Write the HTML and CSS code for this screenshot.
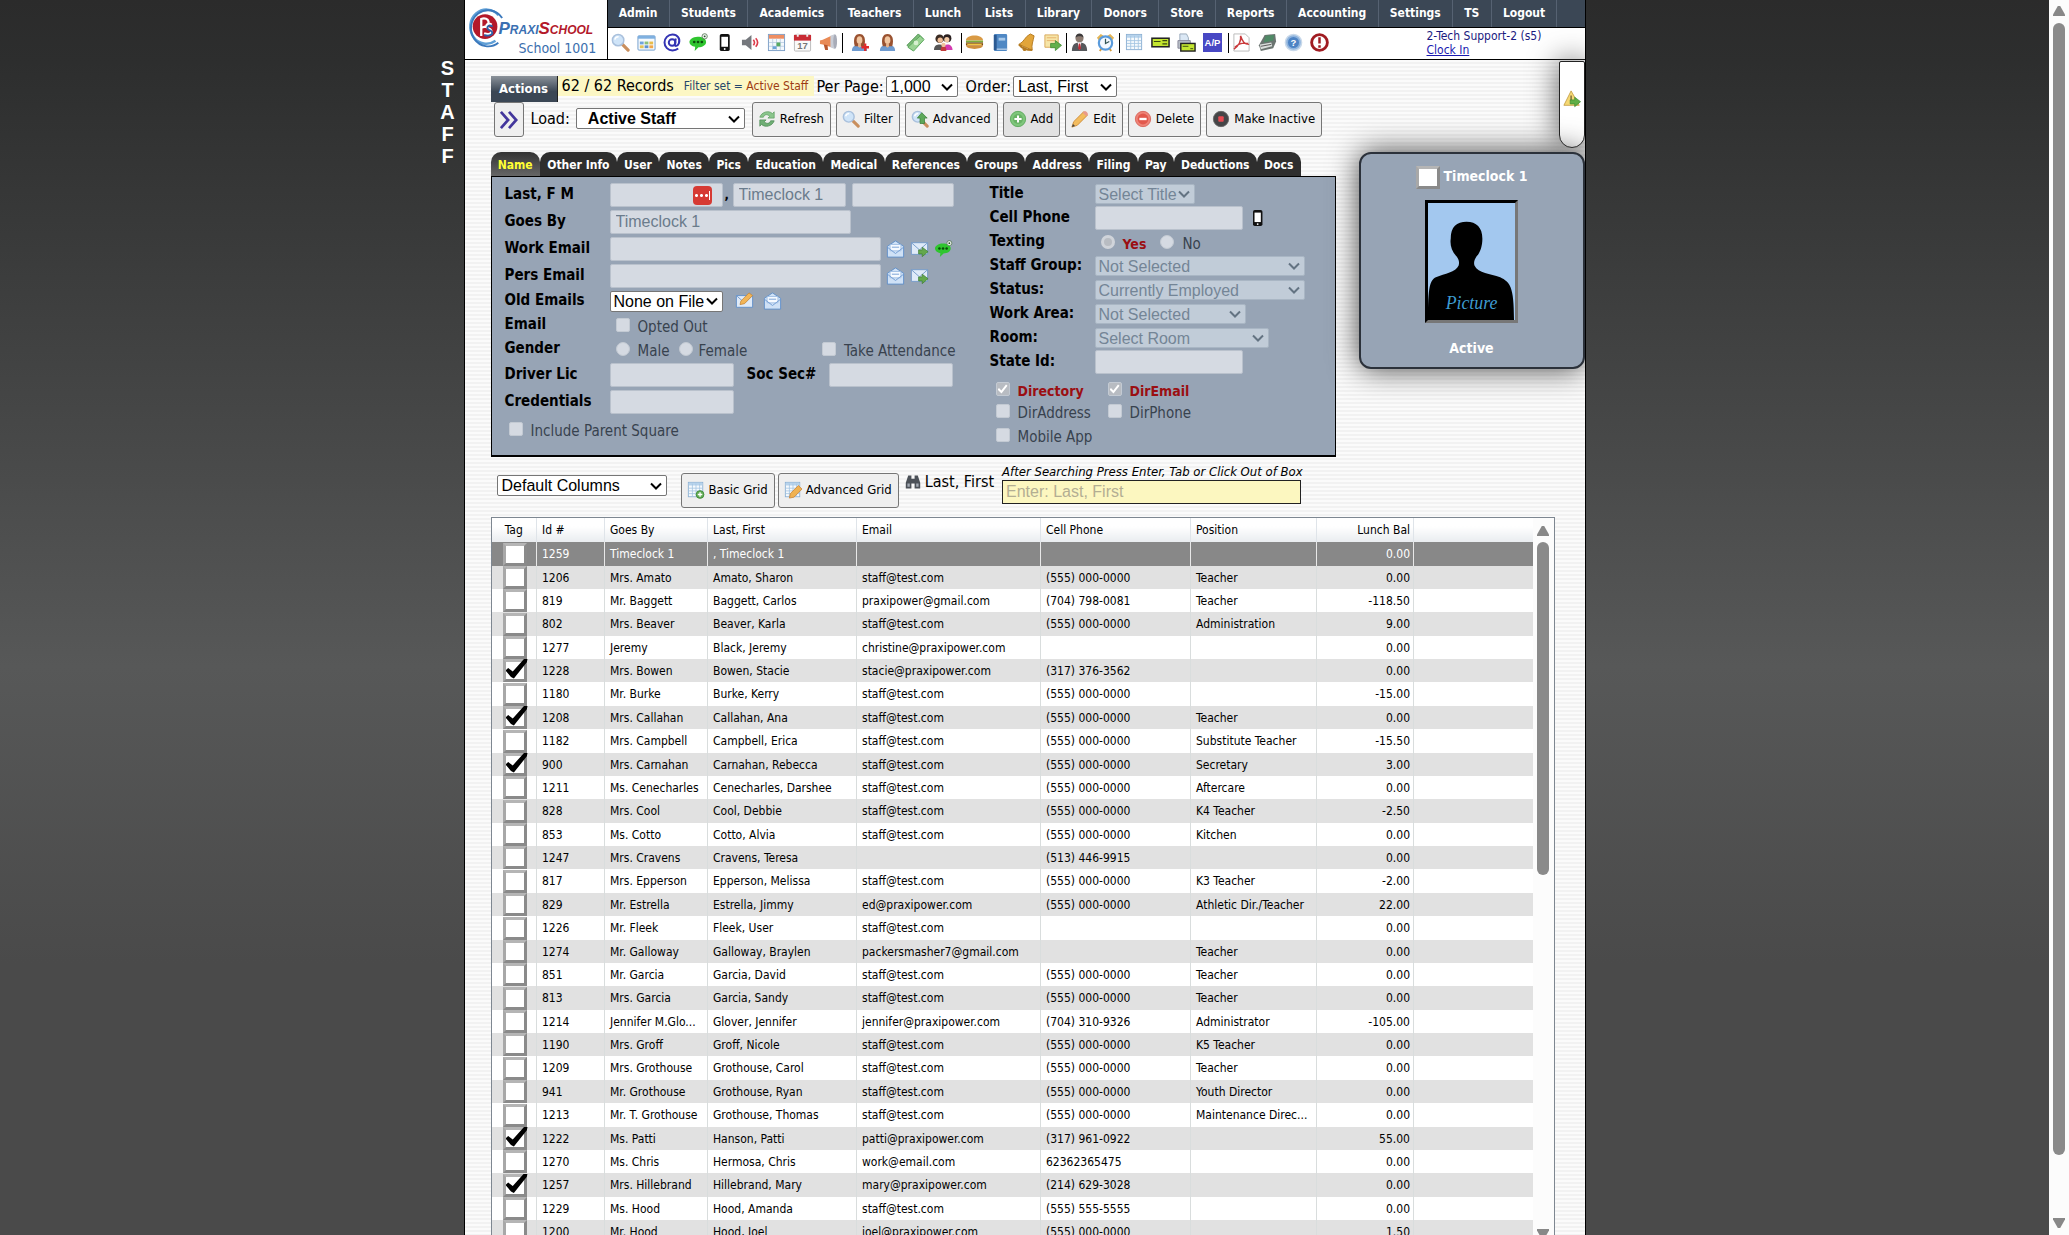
FILE: index.html
```html
<!DOCTYPE html>
<html lang="en">
<head>
<meta charset="utf-8">
<title>PraxiSchool - Staff</title>
<link rel="stylesheet" href="styles.css">
</head>
<body>
<svg class="sprite" aria-hidden="true">
  <symbol id="i-search" viewBox="0 0 20 20"><path d="M11 11l7 7" stroke="#c98f5e" stroke-width="3.4" stroke-linecap="round"/><circle cx="7.5" cy="7.5" r="6" fill="#cfe4f8" stroke="#a9c0dc" stroke-width="1.6"/><path d="M4 7a4 4 0 0 1 4-3" stroke="#fff" stroke-width="1.6" fill="none"/></symbol>
  <symbol id="i-window" viewBox="0 0 20 20"><rect x="1" y="3" width="18" height="15" rx="1" fill="#f5f9fd" stroke="#6f9ccb"/><path d="M1 3h18v3H1z" fill="#7fb0e0"/><path d="M3 9h4v3H3z" fill="#6fa3dc"/><path d="M8 9h4v3H8z" fill="#8cc07a"/><path d="M13 9h4v3h-4z" fill="#e8bc4c"/><path d="M3 13h4v3H3z" fill="#e2c35a"/><path d="M8 13h4v3H8z" fill="#5d92d2"/><path d="M13 13h4v3h-4z" fill="#f0a64a"/></symbol>
  <symbol id="i-at" viewBox="0 0 20 20"><g fill="none" stroke="#3434b4" stroke-width="2.1"><circle cx="9.600" cy="10" r="3.500"/><path d="M13.400 5.800l-1 6.400c-.2 2 3 2 4.300-1.200C18.500 5.500 15 1.600 10 1.600A8.400 8.400 0 0 0 10 18.400c2.600 0 4.600-.8 6-2"/></g></symbol>
  <symbol id="i-chat" viewBox="0 0 20 20"><path d="M9 4c5 0 9 2 9 5.500S14 15 10 15l-4 4 .5-4.400C3 14 .5 12 .5 9.500S4 4 9 4z" fill="#2fc52f"/><g fill="#0a4d0a"><circle cx="5.500" cy="9.500" r="1.400"/><circle cx="9.500" cy="9.500" r="1.400"/><circle cx="13.500" cy="9.500" r="1.400"/></g><circle cx="16.500" cy="3.500" r="2.800" fill="#eef4ee" stroke="#4a6b4a" stroke-width=".8"/><circle cx="16.500" cy="3.500" r="1" fill="#274f27"/></symbol>
  <symbol id="i-phone" viewBox="0 0 20 20"><rect x="5" y="1" width="10.500" height="18" rx="2" fill="#111"/><rect x="6.700" y="4" width="7" height="10.500" fill="#fff"/><circle cx="10.200" cy="16.800" r="1" fill="#fff"/></symbol>
  <symbol id="i-sound" viewBox="0 0 20 20"><path d="M1 7h4l6-5v16l-6-5H1z" fill="#75787d"/><path d="M13 7q2.400 3 0 6M15.500 5.500q4 4.500 0 9" fill="none" stroke="#dd3b4a" stroke-width="1.700"/></symbol>
  <symbol id="i-sched" viewBox="0 0 20 20"><rect x="1.500" y="1.500" width="17" height="17" fill="#f4f8fc" stroke="#7d9fc7"/><path d="M2 2h16v4H2z" fill="#ef8e62"/><path d="M2 10h16M2 14h16M6 6v12M10 6v12M14 6v12" stroke="#b5c9df" stroke-width=".8"/><path d="M10 10h4v4h-4z" fill="#58aa62"/><path d="M6 14h4v3H6z" fill="#6ba4d8"/></symbol>
  <symbol id="i-horn" viewBox="0 0 20 20"><path d="M1 8l3-1 9-4v12l-9-3-3-.5z" fill="#e98a55"/><path d="M12 3l5-2v16l-5-2z" fill="#c9cdd6"/><ellipse cx="17" cy="9" rx="2" ry="7.500" fill="#a8acb8"/><path d="M5 12l1.500 6h3L9 13z" fill="#b7562c"/></symbol>
  <symbol id="i-woman" viewBox="0 0 20 20"><path d="M2 19c0-5 3-6 8-6s8 1 8 6z" fill="#6f9bd0"/><path d="M5 14C3 6 5 1 10 1s7 5 5 13z" fill="#9a5230"/><ellipse cx="10" cy="7.500" rx="3" ry="4" fill="#f1c6a0"/><path d="M8.500 11h3v3l-1.500 1.500L8.500 14z" fill="#e7b48c"/></symbol>
  <symbol id="i-womanadd" viewBox="0 0 20 20"><use href="#i-woman"/><path d="M16 11v8M12 15h8" stroke="#e02a2a" stroke-width="2.400"/></symbol>
  <symbol id="i-cash" viewBox="0 0 20 20"><path d="M1 13L13 1l5 5L7 18z" fill="#7dbb78" stroke="#4c9450"/><path d="M2 15L15 3l4 4L8 19z" fill="#9ad393" stroke="#5aa55c"/><circle cx="10.500" cy="10.500" r="2.500" fill="#d7f0d0"/></symbol>
  <symbol id="i-people" viewBox="0 0 20 20"><circle cx="6" cy="6" r="4.500" fill="#3a2b22"/><circle cx="6.500" cy="7.500" r="2.800" fill="#efbd97"/><circle cx="14" cy="5.500" r="4.300" fill="#2b2020"/><circle cx="13.500" cy="7" r="2.700" fill="#f1c9a5"/><path d="M0 18c0-5 3-6 6-6s5 2 5 6z" fill="#555"/><path d="M10 18c0-5 2-6 4.500-6s5 2 5 6z" fill="#d43bb0"/><path d="M7 19c0-4 1-5 3-5s3 1 3 5z" fill="#c23c3c"/><circle cx="10" cy="12.500" r="2.300" fill="#f0c49c"/></symbol>
  <symbol id="i-burger" viewBox="0 0 20 20"><path d="M1 8c0-7 18-7 18 0z" fill="#d99a44"/><path d="M1 8h18v2H1z" fill="#7fae3a"/><path d="M1 10h18v3H1z" fill="#6b3d1e"/><path d="M1 11h18l-2 1.500H3z" fill="#f0c545"/><path d="M1 13h18c0 5-18 5-18 0z" fill="#cf8f3c"/></symbol>
  <symbol id="i-book" viewBox="0 0 20 20"><rect x="3" y="1" width="14" height="18" rx="1.500" fill="#4f88c4"/><path d="M3 2h3v16H3z" fill="#2b5a92"/><path d="M8 5h7v3H8z" fill="#a8c9ea"/><path d="M6 17h11" stroke="#dce8f4"/></symbol>
  <symbol id="i-bell" viewBox="0 0 20 20"><path d="M2 12C8 9 8 4 14 1l4 2c-1 6-3 9-2 15z" fill="#e2a53a" stroke="#b57a1f"/><path d="M2 12c3 4 9 6 14 6" stroke="#b57a1f" stroke-width="2" fill="none"/><circle cx="8" cy="17" r="2" fill="#b57a1f"/></symbol>
  <symbol id="i-export" viewBox="0 0 20 20"><path d="M2 2h14v13H2z" fill="#f6e5a8" stroke="#d9a95c"/><path d="M4 5h10M4 8h9" stroke="#e7b26c"/><path d="M8 11h5V8l6.500 5-6.500 5.500v-3H8z" fill="#62b04a" stroke="#3d8a2f" stroke-width=".8"/></symbol>
  <symbol id="i-man" viewBox="0 0 20 20"><path d="M2 19c0-7 3-9 8-9s8 2 8 9z" fill="#56585c"/><circle cx="10" cy="5.500" r="4.200" fill="#8b7a70"/><path d="M5.800 5c0-6 8.400-6 8.400 0-2-2-6-2-8.400 0z" fill="#3c3a3a"/><path d="M8 10h4l-2 8z" fill="#fff"/><path d="M9.300 11h1.500l.6 5-1.400 2-1.300-2z" fill="#c52b35"/></symbol>
  <symbol id="i-clock" viewBox="0 0 20 20"><path d="M1 5l4-4 3 2-5 5zM19 5l-4-4-3 2 5 5z" fill="#e3b455"/><path d="M4 19l2-3M16 19l-2-3" stroke="#d39a3b" stroke-width="2"/><circle cx="10" cy="10.500" r="7" fill="#f4f9ff" stroke="#5a9bdc" stroke-width="2.300"/><path d="M10 6v5l4-2" fill="none" stroke="#355" stroke-width="1.300"/></symbol>
  <symbol id="i-grid" viewBox="0 0 20 20"><rect x="1.500" y="1.500" width="16" height="16" fill="#f6fafd" stroke="#8db1d4"/><path d="M2 2h15v3H2z" fill="#b7d3ec"/><path d="M2 8h15M2 11h15M2 14h15M6 3v14M10 3v14M14 3v14" stroke="#a5c5e2" stroke-width=".9"/></symbol>
  <symbol id="i-gridadd" viewBox="0 0 20 20"><use href="#i-grid"/><circle cx="14.500" cy="15" r="4.300" fill="#63ad56" stroke="#3d8a35"/><path d="M14.500 12.500v5M12 15h5" stroke="#fff" stroke-width="1.500"/></symbol>
  <symbol id="i-gridedit" viewBox="0 0 20 20"><use href="#i-grid"/><path d="M6 19l1-5 9-9 4 4-9 9z" fill="#f0b252" stroke="#c97f2d" stroke-width=".8"/></symbol>
  <symbol id="i-check" viewBox="0 0 20 20"><rect x="1" y="5.500" width="18" height="9" fill="#c3e52f" stroke="#222" stroke-width="1.600"/><path d="M3 9h7M12 11.500h5M12 8h5" stroke="#3a4a10" stroke-width="1.200"/></symbol>
  <symbol id="i-checkprint" viewBox="0 0 20 20"><path d="M3 1h7l2 4v4H3z" fill="#dbe8f5" stroke="#9ab"/><path d="M1 8h13v8H1z" fill="#b8bec6" stroke="#889"/><rect x="4" y="11" width="15" height="8" fill="#c3e52f" stroke="#222" stroke-width="1.500"/><path d="M6 14h6M14 16.500h3" stroke="#3a4a10"/></symbol>
  <symbol id="i-pdf" viewBox="0 0 20 20"><path d="M2 1h12l4 4v14H2z" fill="#fff" stroke="#bbb"/><path d="M9 3c2 6 4 9 9 9M9 3c1 6-3 11-7 14M3 15c4-4 9-5 14-4" fill="none" stroke="#c9393b" stroke-width="1.500"/></symbol>
  <symbol id="i-register" viewBox="0 0 20 20"><path d="M7 2l11-1 1 8-3 7-13 3-2-6z" fill="#6a7470"/><path d="M8 3l9-1-1 6-10 2z" fill="#4f8a66"/><path d="M2 12l12-2 1 4-12 3z" fill="#d9dedb"/><path d="M3 14l11-2" stroke="#555"/></symbol>
  <symbol id="i-alert" viewBox="0 0 20 20"><circle cx="10" cy="10" r="8.300" fill="#fff" stroke="#a01c22" stroke-width="3"/><path d="M10 4.500v6.500M10 13v2.500" stroke="#a01c22" stroke-width="2.600"/></symbol>
  <symbol id="i-refresh" viewBox="0 0 20 20"><path d="M2 8C4 2 12 0 16 4l2-2v7h-7l2-2C10 4 7 5 6 8z" fill="#8ac58c" stroke="#5d9c62" stroke-width=".8"/><path d="M18 12c-2 6-10 8-14 4l-2 2v-7h7l-2 2c3 3 6 2 7-1z" fill="#6fae74" stroke="#4c8a53" stroke-width=".8"/></symbol>
  <symbol id="i-advsearch" viewBox="0 0 20 20"><use href="#i-search"/><path d="M12 3l6 6h-3v6h-5V9H7z" fill="#5da85a" stroke="#3b7f3c" stroke-width=".8"/></symbol>
  <symbol id="i-add" viewBox="0 0 20 20"><circle cx="10" cy="10" r="8.500" fill="#7fc67c" stroke="#5ea95d"/><circle cx="10" cy="10" r="5.500" fill="#68b265"/><path d="M10 6v8M6 10h8" stroke="#fff" stroke-width="2.200"/></symbol>
  <symbol id="i-edit" viewBox="0 0 20 20"><path d="M1 19l2-6L14 2l4 4L7 17z" fill="#f3bc5e" stroke="#cc8a35"/><path d="M13 3l2-2q3 0 4 4l-2 2z" fill="#e99a8a"/><path d="M1 19l1.200-3.500 2.300 2.300z" fill="#444"/></symbol>
  <symbol id="i-delete" viewBox="0 0 20 20"><circle cx="10" cy="10" r="8.500" fill="#ee8478" stroke="#d8665b"/><circle cx="10" cy="10" r="6" fill="#e2584c"/><path d="M6 10h8" stroke="#fff" stroke-width="2.600"/></symbol>
  <symbol id="i-stop" viewBox="0 0 20 20"><circle cx="10" cy="10" r="8.500" fill="#454547" stroke="#666"/><rect x="7" y="7" width="6" height="6" rx="1" fill="#e84a52"/></symbol>
  <symbol id="i-fwd" viewBox="0 0 20 20"><path d="M1 1l8 9-8 9M10 1l8 9-8 9" fill="none" stroke="#43369c" stroke-width="3"/></symbol>
  <symbol id="i-warn" viewBox="0 0 20 20"><path d="M9 1l9 16H1z" fill="#f5d873" stroke="#c7a24a"/><path d="M9 6v6" stroke="#7a6a3a" stroke-width="1.600"/><path d="M8 11h5V8l6.500 5-6.500 5.500v-3H8z" fill="#5fae45" stroke="#3d8a2f" stroke-width=".8"/></symbol>
  <symbol id="i-open" viewBox="0 0 20 20"><path d="M1 7l9-6 9 6v12H1z" fill="#cfe1f6" stroke="#5f8fca"/><path d="M4 5h12v7H4z" fill="#f6faff" stroke="#8fb3dd" stroke-width=".8"/><path d="M6 8h8M1 8l9 7 9-7" fill="none" stroke="#6f9bd2"/></symbol>
  <symbol id="i-send" viewBox="0 0 20 20"><path d="M1 3h18v13H1z" fill="#dfeaf8" stroke="#7298c8"/><path d="M1 3l9 8 9-8" fill="none" stroke="#7298c8"/><path d="M9 11h4V8l6.500 5-6.500 5.500v-3H9z" fill="#64a84d" stroke="#3f7e33" stroke-width=".8"/></symbol>
  <symbol id="i-mailedit" viewBox="0 0 20 20"><path d="M1 4h18v13H1z" fill="#dfeaf8" stroke="#5f8fca"/><path d="M1 4l9 8 9-8" fill="none" stroke="#7298c8"/><path d="M5 14l1-4 9-9 4 3-9 9z" fill="#f2b557" stroke="#c5822f" stroke-width=".8"/></symbol>
  <symbol id="i-binoc" viewBox="0 0 20 20"><path d="M4 2h4v4h4V2h4l3 9v7h-7v-6H8v6H1v-7z" fill="#4c5158"/><path d="M3 12h3v4H3zM14 12h3v4h-3z" fill="#a4abb5"/></symbol>
</svg>

<div class="app">
<aside class="side"><h1 class="side-title"><span>S</span><span>T</span><span>A</span><span>F</span><span>F</span></h1></aside>
<div class="page">
  <header class="top">
    <a class="logo" href="#">
      <svg class="logo-mark" viewBox="0 0 40 44" aria-hidden="true"><path d="M33 9A17 18 0 1 0 30 36" fill="none" stroke="#5f9fd6" stroke-width="2.500"/><path d="M37 12A18 19 0 1 0 33 38" fill="none" stroke="#3b79bd" stroke-width="2"/><circle cx="19" cy="21" r="13" fill="#b3182a"/><path d="M15 31V13c8-3 12 7 1 9M26 19c-5-3-8 2-3 4s3 8-5 5" fill="none" stroke="#fff" stroke-width="2.400"/><path d="M27 21c-5-3-8 2-3 4s3 7-6 5" fill="none" stroke="#2c5fa8" stroke-width="2"/></svg>
      <span class="logo-words"><span class="brand">Praxi<b>School</b></span><span class="school">School 1001</span></span>
    </a>
    <nav class="menu"><a href="#">Admin</a><a href="#">Students</a><a href="#">Academics</a><a href="#">Teachers</a><a href="#">Lunch</a><a href="#">Lists</a><a href="#">Library</a><a href="#">Donors</a><a href="#">Store</a><a href="#">Reports</a><a href="#">Accounting</a><a href="#">Settings</a><a href="#">TS</a><a href="#">Logout</a></nav>
    <div class="shortcuts">
      <div class="group"><a href="#"><svg><use href="#i-search"/></svg></a><a href="#"><svg><use href="#i-window"/></svg></a><a href="#"><svg><use href="#i-at"/></svg></a><a href="#"><svg><use href="#i-chat"/></svg></a><a href="#"><svg><use href="#i-phone"/></svg></a><a href="#"><svg><use href="#i-sound"/></svg></a><a href="#"><svg><use href="#i-sched"/></svg></a><a href="#"><svg viewBox="0 0 20 20"><rect x="1.500" y="2" width="17" height="17" rx="1" fill="#fafafa" stroke="#bbb"/><path d="M1 2h18v6H1z" fill="#c82b34"/><path d="M5 0v4M15 0v4" stroke="#eee" stroke-width="2"/><text class="ico-text grey" x="10" y="17">17</text></svg></a><a href="#"><svg><use href="#i-horn"/></svg></a></div>
      <div class="group wide"><a href="#"><svg><use href="#i-womanadd"/></svg></a><a href="#"><svg><use href="#i-woman"/></svg></a><a href="#"><svg><use href="#i-cash"/></svg></a><a href="#"><svg><use href="#i-people"/></svg></a></div>
      <div class="group"><a href="#"><svg><use href="#i-burger"/></svg></a><a href="#"><svg><use href="#i-book"/></svg></a><a href="#"><svg><use href="#i-bell"/></svg></a><a href="#"><svg><use href="#i-export"/></svg></a></div>
      <div class="group"><a href="#"><svg><use href="#i-man"/></svg></a><a href="#"><svg><use href="#i-clock"/></svg></a></div>
      <div class="group pad"><a href="#"><svg><use href="#i-grid"/></svg></a><a href="#"><svg><use href="#i-check"/></svg></a><a href="#"><svg><use href="#i-checkprint"/></svg></a><a href="#"><svg viewBox="0 0 20 20"><path d="M0 0h20v20H0z" fill="#4848c4"/><text class="ico-text" x="10" y="14">A/P</text></svg></a></div>
      <div class="group"><a href="#"><svg><use href="#i-pdf"/></svg></a><a href="#"><svg><use href="#i-register"/></svg></a><a href="#"><svg viewBox="0 0 20 20"><circle cx="10" cy="10" r="8.500" fill="#8fb4de" stroke="#c9d9ea" stroke-width="1.600"/><circle cx="10" cy="10" r="5.800" fill="#4d83c4"/><text class="ico-text" x="10" y="14">?</text></svg></a><a href="#"><svg><use href="#i-alert"/></svg></a></div>
      <div class="user"><span>2-Tech Support-2 (s5)</span><a href="#">Clock In</a></div>
    </div>
  </header>

  <div class="body">
  <main class="main">
    <div class="bar records">
      <button class="actions" type="button">Actions</button>
      <p class="count"><span>62 / 62 Records</span><small>Filter set = <em>Active Staff</em></small></p>
      <label for="per">Per Page:</label><select id="per" class="w72"><option>1,000</option></select>
      <label for="order">Order:</label><select id="order" class="w104"><option>Last, First</option></select>
    </div>
    <div class="bar tools">
      <button class="btn jump" type="button" aria-label="More"><svg><use href="#i-fwd"/></svg></button>
      <label for="load">Load:</label><select id="load" class="load"><option>Active Staff</option></select>
      <button class="btn" type="button"><svg><use href="#i-refresh"/></svg>Refresh</button>
      <button class="btn" type="button"><svg><use href="#i-search"/></svg>Filter</button>
      <button class="btn" type="button"><svg><use href="#i-advsearch"/></svg>Advanced</button>
      <button class="btn on" type="button"><svg><use href="#i-add"/></svg>Add</button>
      <button class="btn" type="button"><svg><use href="#i-edit"/></svg>Edit</button>
      <button class="btn" type="button"><svg><use href="#i-delete"/></svg>Delete</button>
      <button class="btn" type="button"><svg><use href="#i-stop"/></svg>Make Inactive</button>
    </div>

    <nav class="tabs"><a class="current" href="#">Name</a><a href="#">Other Info</a><a href="#">User</a><a href="#">Notes</a><a href="#">Pics</a><a href="#">Education</a><a href="#">Medical</a><a href="#">References</a><a href="#">Groups</a><a href="#">Address</a><a href="#">Filing</a><a href="#">Pay</a><a href="#">Deductions</a><a href="#">Docs</a></nav>
    <form class="panel">
      <div class="left">
        <div class="row"><label for="last">Last, F M</label><span class="with-badge"><input id="last" class="w113" type="text" disabled><i class="badge"></i></span><b class="comma">,</b><input class="w113" type="text" value="Timeclock 1" aria-label="First" disabled><input class="w102" type="text" aria-label="Middle" disabled></div>
        <div class="row"><label for="goes">Goes By</label><input id="goes" class="w241" type="text" value="Timeclock 1" disabled></div>
        <div class="row"><label for="work">Work Email</label><input id="work" class="w271" type="text" disabled><svg><use href="#i-open"/></svg><svg><use href="#i-send"/></svg><svg><use href="#i-chat"/></svg></div>
        <div class="row"><label for="pers">Pers Email</label><input id="pers" class="w271" type="text" disabled><svg><use href="#i-open"/></svg><svg><use href="#i-send"/></svg></div>
        <div class="row short"><label for="old">Old Emails</label><select id="old" class="w113"><option>None on File</option></select><svg class="far"><use href="#i-mailedit"/></svg><svg><use href="#i-open"/></svg></div>
        <div class="row short"><span class="label">Email</span><label class="tick"><input type="checkbox" disabled><span>Opted Out</span></label></div>
        <div class="row short"><span class="label">Gender</span><label class="tick"><input type="radio" name="gender" disabled><span>Male</span></label><label class="tick tight"><input type="radio" name="gender" disabled><span>Female</span></label><label class="tick end"><input type="checkbox" disabled><span>Take Attendance</span></label></div>
        <div class="row"><label for="lic">Driver Lic</label><input id="lic" class="w124" type="text" disabled><label class="second" for="soc">Soc Sec#</label><input id="soc" class="w124" type="text" disabled></div>
        <div class="row"><label for="cred">Credentials</label><input id="cred" class="w124" type="text" disabled></div>
        <div class="row"><label class="tick first"><input type="checkbox" disabled><span>Include Parent Square</span></label></div>
      </div>
      <div class="right">
        <div class="row short"><label for="title">Title</label><select id="title" class="w100" disabled><option>Select Title</option></select></div>
        <div class="row short"><label for="cell">Cell Phone</label><input id="cell" class="w148" type="text" disabled><svg><use href="#i-phone"/></svg></div>
        <div class="row"><span class="label">Texting</span><label class="tick red"><input type="radio" name="texting" checked disabled><span>Yes</span></label><label class="tick no"><input type="radio" name="texting" disabled><span>No</span></label></div>
        <div class="row short"><label for="grp">Staff Group:</label><select id="grp" class="w210" disabled><option>Not Selected</option></select></div>
        <div class="row short"><label for="stat">Status:</label><select id="stat" class="w210" disabled><option>Currently Employed</option></select></div>
        <div class="row short"><label for="area">Work Area:</label><select id="area" class="w151" disabled><option>Not Selected</option></select></div>
        <div class="row short"><label for="room">Room:</label><select id="room" class="w174" disabled><option>Select Room</option></select></div>
        <div class="row short"><label for="sid">State Id:</label><input id="sid" class="w148" type="text" disabled></div>
        <div class="ticks">
          <label class="tick red"><input type="checkbox" checked disabled><span>Directory</span></label><label class="tick red"><input type="checkbox" checked disabled><span>DirEmail</span></label>
          <label class="tick"><input type="checkbox" disabled><span>DirAddress</span></label><label class="tick"><input type="checkbox" disabled><span>DirPhone</span></label>
          <label class="tick"><input type="checkbox" disabled><span>Mobile App</span></label>
        </div>
      </div>
    </form>

    <div class="bar gridbar">
      <select class="w170" aria-label="Columns"><option>Default Columns</option></select>
      <button class="btn" type="button"><svg><use href="#i-gridadd"/></svg>Basic Grid</button><button class="btn" type="button"><svg><use href="#i-gridedit"/></svg>Advanced Grid</button>
      <label class="find" for="find"><svg><use href="#i-binoc"/></svg>Last, First</label>
      <span class="hint"><small>After Searching Press Enter, Tab or Click Out of Box</small><input id="find" type="text" placeholder="Enter: Last, First"></span>
    </div>
  </main>

  <aside class="rail">
    <button class="pill" type="button" aria-label="Alerts"><svg><use href="#i-warn"/></svg></button>
    <section class="card">
      <label class="who"><input class="tag" type="checkbox"><span>Timeclock 1</span></label>
      <svg class="photo" viewBox="0 0 88 118" preserveAspectRatio="none"><path d="M0 0h88v118H0z" fill="#a3c8ef"/><path d="M0 118c0-34 2-40 8-43 9-4 20-5 23-12 1-4 0-6-2-9-5-5-7-12-6-18 0-12 6-17 16-17s16 6 16 17c0 7-2 14-6 18-2 3-3 6-2 9 4 8 16 8 26 12 10 5 14 9 14 43z" fill="#000"/><text class="photo-text" x="44" y="107">Picture</text></svg>
      <strong>Active</strong>
    </section>
  </aside>
  </div>

  <div class="grid">
    <table>
      <colgroup><col class="c-tag"><col class="c-id"><col class="c-goes"><col class="c-last"><col class="c-mail"><col class="c-cell"><col class="c-pos"><col class="c-bal"><col></colgroup>
      <thead><tr><th>Tag<th>Id #<th>Goes By<th>Last, First<th>Email<th>Cell Phone<th>Position<th>Lunch Bal<th></tr></thead>
      <tbody>
      <tr class="sel"><td><input class="tag" type="checkbox" aria-label="Tag 1259"><td>1259<td>Timeclock 1<td>, Timeclock 1<td><td><td><td>0.00<td>
      <tr><td><input class="tag" type="checkbox" aria-label="Tag 1206"><td>1206<td>Mrs. Amato<td>Amato, Sharon<td>staff@test.com<td>(555) 000-0000<td>Teacher<td>0.00<td>
      <tr><td><input class="tag" type="checkbox" aria-label="Tag 819"><td>819<td>Mr. Baggett<td>Baggett, Carlos<td>praxipower@gmail.com<td>(704) 798-0081<td>Teacher<td>-118.50<td>
      <tr><td><input class="tag" type="checkbox" aria-label="Tag 802"><td>802<td>Mrs. Beaver<td>Beaver, Karla<td>staff@test.com<td>(555) 000-0000<td>Administration<td>9.00<td>
      <tr><td><input class="tag" type="checkbox" aria-label="Tag 1277"><td>1277<td>Jeremy<td>Black, Jeremy<td>christine@praxipower.com<td><td><td>0.00<td>
      <tr><td><input class="tag" type="checkbox" checked aria-label="Tag 1228"><td>1228<td>Mrs. Bowen<td>Bowen, Stacie<td>stacie@praxipower.com<td>(317) 376-3562<td><td>0.00<td>
      <tr><td><input class="tag" type="checkbox" aria-label="Tag 1180"><td>1180<td>Mr. Burke<td>Burke, Kerry<td>staff@test.com<td>(555) 000-0000<td><td>-15.00<td>
      <tr><td><input class="tag" type="checkbox" checked aria-label="Tag 1208"><td>1208<td>Mrs. Callahan<td>Callahan, Ana<td>staff@test.com<td>(555) 000-0000<td>Teacher<td>0.00<td>
      <tr><td><input class="tag" type="checkbox" aria-label="Tag 1182"><td>1182<td>Mrs. Campbell<td>Campbell, Erica<td>staff@test.com<td>(555) 000-0000<td>Substitute Teacher<td>-15.50<td>
      <tr><td><input class="tag" type="checkbox" checked aria-label="Tag 900"><td>900<td>Mrs. Carnahan<td>Carnahan, Rebecca<td>staff@test.com<td>(555) 000-0000<td>Secretary<td>3.00<td>
      <tr><td><input class="tag" type="checkbox" aria-label="Tag 1211"><td>1211<td>Ms. Cenecharles<td>Cenecharles, Darshee<td>staff@test.com<td>(555) 000-0000<td>Aftercare<td>0.00<td>
      <tr><td><input class="tag" type="checkbox" aria-label="Tag 828"><td>828<td>Mrs. Cool<td>Cool, Debbie<td>staff@test.com<td>(555) 000-0000<td>K4 Teacher<td>-2.50<td>
      <tr><td><input class="tag" type="checkbox" aria-label="Tag 853"><td>853<td>Ms. Cotto<td>Cotto, Alvia<td>staff@test.com<td>(555) 000-0000<td>Kitchen<td>0.00<td>
      <tr><td><input class="tag" type="checkbox" aria-label="Tag 1247"><td>1247<td>Mrs. Cravens<td>Cravens, Teresa<td><td>(513) 446-9915<td><td>0.00<td>
      <tr><td><input class="tag" type="checkbox" aria-label="Tag 817"><td>817<td>Mrs. Epperson<td>Epperson, Melissa<td>staff@test.com<td>(555) 000-0000<td>K3 Teacher<td>-2.00<td>
      <tr><td><input class="tag" type="checkbox" aria-label="Tag 829"><td>829<td>Mr. Estrella<td>Estrella, Jimmy<td>ed@praxipower.com<td>(555) 000-0000<td>Athletic Dir./Teacher<td>22.00<td>
      <tr><td><input class="tag" type="checkbox" aria-label="Tag 1226"><td>1226<td>Mr. Fleek<td>Fleek, User<td>staff@test.com<td><td><td>0.00<td>
      <tr><td><input class="tag" type="checkbox" aria-label="Tag 1274"><td>1274<td>Mr. Galloway<td>Galloway, Braylen<td>packersmasher7@gmail.com<td><td>Teacher<td>0.00<td>
      <tr><td><input class="tag" type="checkbox" aria-label="Tag 851"><td>851<td>Mr. Garcia<td>Garcia, David<td>staff@test.com<td>(555) 000-0000<td>Teacher<td>0.00<td>
      <tr><td><input class="tag" type="checkbox" aria-label="Tag 813"><td>813<td>Mrs. Garcia<td>Garcia, Sandy<td>staff@test.com<td>(555) 000-0000<td>Teacher<td>0.00<td>
      <tr><td><input class="tag" type="checkbox" aria-label="Tag 1214"><td>1214<td>Jennifer M.Glo...<td>Glover, Jennifer<td>jennifer@praxipower.com<td>(704) 310-9326<td>Administrator<td>-105.00<td>
      <tr><td><input class="tag" type="checkbox" aria-label="Tag 1190"><td>1190<td>Mrs. Groff<td>Groff, Nicole<td>staff@test.com<td>(555) 000-0000<td>K5 Teacher<td>0.00<td>
      <tr><td><input class="tag" type="checkbox" aria-label="Tag 1209"><td>1209<td>Mrs. Grothouse<td>Grothouse, Carol<td>staff@test.com<td>(555) 000-0000<td>Teacher<td>0.00<td>
      <tr><td><input class="tag" type="checkbox" aria-label="Tag 941"><td>941<td>Mr. Grothouse<td>Grothouse, Ryan<td>staff@test.com<td>(555) 000-0000<td>Youth Director<td>0.00<td>
      <tr><td><input class="tag" type="checkbox" aria-label="Tag 1213"><td>1213<td>Mr. T. Grothouse<td>Grothouse, Thomas<td>staff@test.com<td>(555) 000-0000<td>Maintenance Direc...<td>0.00<td>
      <tr><td><input class="tag" type="checkbox" checked aria-label="Tag 1222"><td>1222<td>Ms. Patti<td>Hanson, Patti<td>patti@praxipower.com<td>(317) 961-0922<td><td>55.00<td>
      <tr><td><input class="tag" type="checkbox" aria-label="Tag 1270"><td>1270<td>Ms. Chris<td>Hermosa, Chris<td>work@email.com<td>62362365475<td><td>0.00<td>
      <tr><td><input class="tag" type="checkbox" checked aria-label="Tag 1257"><td>1257<td>Mrs. Hillebrand<td>Hillebrand, Mary<td>mary@praxipower.com<td>(214) 629-3028<td><td>0.00<td>
      <tr><td><input class="tag" type="checkbox" aria-label="Tag 1229"><td>1229<td>Ms. Hood<td>Hood, Amanda<td>staff@test.com<td>(555) 555-5555<td><td>0.00<td>
      <tr><td><input class="tag" type="checkbox" aria-label="Tag 1200"><td>1200<td>Mr. Hood<td>Hood, Joel<td>joel@praxipower.com<td>(555) 000-0000<td><td>1.50<td>
      </tbody>
    </table>
    <div class="scroll inner" aria-hidden="true"><i class="up"></i><i class="thumb"></i><i class="down"></i></div>
  </div>
</div>
</div>
<div class="scroll outer" aria-hidden="true"><i class="up"></i><i class="thumb"></i><i class="down"></i></div>
</body>
</html>
```
FILE: styles.css
```css
* { box-sizing: border-box; }
:root { --ui: "DejaVu Sans Condensed", "Noto Sans", sans-serif; --arial: "Liberation Sans", Arial, sans-serif; --slate: #3b4755; --panel: #97a4b5; }
body { margin: 0; height: 100vh; overflow: hidden; display: grid; grid-template-columns: minmax(0, 1fr) 20px; grid-template-rows: 100vh; font: 13px/16px var(--ui); color: #000; }
p, h1 { margin: 0; }
svg { display: block; width: 20px; height: 20px; flex: none; }
.sprite { position: absolute; width: 0; height: 0; }
button, input, select { font: inherit; color: inherit; margin: 0; }

.app { display: grid; grid-template-columns: 1fr minmax(0, 1122px) 1fr; background: linear-gradient(#2b2b2b, #2d2e2e 5%, #575858 54%, #4a4a4a 78%, #4a4a4a); overflow: hidden; }
.side { display: flex; justify-content: flex-end; padding: 57px 7px 0 0; }
.side-title { display: flex; flex-direction: column; width: 18px; text-align: center; font: bold 20px/22px var(--arial); color: #fff; }
.page { display: flex; flex-direction: column; min-height: 0; overflow: hidden; border: solid #000; border-width: 0 1px; background: repeating-linear-gradient(#fbfbfb 0 2px, #f2f2f2 2px 4px); }

/* Header */
.top { display: grid; grid-template: 28px 31px / 143px minmax(0, 1fr); background: #fff; border-bottom: 1px solid #000; flex: none; }
.logo { grid-row: span 2; display: flex; padding: 6px 0 0 2px; border-right: 1px solid #000; text-decoration: none; }
.logo-mark { width: 38px; height: 43px; margin-right: -6px; }
.logo-words { display: flex; flex-direction: column; padding-top: 14px; }
.brand { font: italic bold 17px/18px var(--arial); font-variant: small-caps; color: #3a6fb2; }
.brand b { color: #b3182a; }
.school { padding-left: 20px; font-size: 14px; line-height: 20px; color: #3b6fae; }
.menu { display: flex; padding-right: 27px; background: var(--slate); border-bottom: 1px solid #000; }
.menu a { flex: 1 0 auto; padding: 0 11px; text-align: center; border-right: 1px solid #566272; font-weight: bold; font-size: 12px; line-height: 27px; color: #fff; text-decoration: none; }
.shortcuts { display: flex; align-items: center; padding-bottom: 2px; }
.group { display: flex; }
.group + .group { border-left: 1px solid #000; height: 20px; }
.group a { width: 26px; height: 20px; display: grid; place-items: center; }
.group a svg { width: 19px; height: 19px; }
.group.wide { gap: 2px; padding: 0 4px; }
.group.pad { padding: 0 2px; }
.ico-text { font: bold 10px var(--arial); text-anchor: middle; fill: #fff; }
.ico-text.grey { fill: #777; }
.user { margin-left: auto; width: 158px; display: flex; flex-direction: column; font-size: 12px; line-height: 14px; color: #1a1a80; }
.user a { color: #1a1ab0; }

/* Bars */
.body { display: grid; grid-template-columns: minmax(0, 1fr) 226px; flex: none; }
.main { padding: 16px 0 0 26px; }
.bar { display: flex; align-items: flex-start; font-size: 16px; line-height: 20px; }
.bar label { white-space: nowrap; }
.actions { width: 67px; height: 26px; padding: 0; border: 0; border-right: 1px solid #222; background: linear-gradient(#8b929a, var(--slate) 60%); color: #fff; font-size: 13px; font-weight: bold; }
.count { display: flex; align-items: center; gap: 10px; width: 256px; height: 20px; padding-left: 4px; margin-right: 3px; background: #fcf7c4; white-space: nowrap; }
.count small { font-size: 12px; color: #24466b; }
.count em { font-style: normal; color: #9c3b12; }
select { appearance: none; height: 21px; padding: 0 4px; border: 1px solid #767676; border-radius: 2px; font: 16px/19px var(--arial); background: #fff url("data:image/svg+xml,%3Csvg xmlns='http://www.w3.org/2000/svg' viewBox='0 0 12 8'%3E%3Cpath d='M1 1.500l5 5 5-5' fill='none' stroke='%23000' stroke-width='2'/%3E%3C/svg%3E") no-repeat right 4px center / 12px 8px; color: #000; opacity: 1; }
.records label { padding: 1px 2px 0 0; }
.records select + label { padding-left: 8px; }
.load { width: 169px; margin: 6px 2px 0 0; padding-left: 11px; font-weight: bold; }
.tools { gap: 5px; }
.tools label { padding: 7px 1px 0 2px; }
.btn { display: flex; align-items: center; gap: 3px; height: 35px; padding: 0 6px 2px 4px; border: 1px solid #767676; border-radius: 3px; background: #efefef; font-size: 13px; line-height: 16px; white-space: nowrap; }
.btn.on { background: #e2e2e2; }
.btn svg { width: 20px; height: 18px; }
.btn.jump { width: 30px; margin-left: 3px; padding: 0 4px; }

/* Tabs and form */
.tabs { display: flex; width: 810px; max-width: 100%; margin-top: 15px; }
.tabs a { flex: 1 0 auto; padding: 0 7px; height: 24px; border-radius: 10px 10px 0 0; background: #2e2e2e; color: #fff; font-size: 12px; font-weight: bold; line-height: 27px; text-align: center; text-decoration: none; white-space: nowrap; }
.tabs .current { background: linear-gradient(#333, #666); color: #ff3; }
.panel { display: grid; grid-template-columns: 485px minmax(0, 1fr); width: 845px; max-width: 100%; height: 281px; padding: 4px 0 0 13px; border: 1px solid #000; border-bottom-width: 2px; background: var(--panel); }
.row { display: flex; align-items: center; height: 27px; }
.row.short { height: 24px; }
.right { padding-top: 1px; }
.right .row { height: 24px; }
.row > label:first-child, .label { width: 105px; padding-bottom: 2px; font-size: 15px; font-weight: bold; line-height: 20px; white-space: nowrap; }
.panel input[type=text] { height: 24px; padding: 0 5px; border: 1px solid #b9c1cc; border-radius: 2px; background: #d5dae2; font: 16px/20px var(--arial); color: #6b7c8c; }
.panel select { padding: 0 3px; }
.panel select:disabled { height: 20px; border-color: #a9b6c4; background-color: #c1ccd8; color: #748596; background-image: url("data:image/svg+xml,%3Csvg xmlns='http://www.w3.org/2000/svg' viewBox='0 0 12 8'%3E%3Cpath d='M1 1.500l5 5 5-5' fill='none' stroke='%23637382' stroke-width='2'/%3E%3C/svg%3E"); }
.row svg { width: 19px; height: 18px; margin-left: 5px; }
.row .far { margin-left: 12px; margin-right: 4px; }
.with-badge { display: flex; position: relative; }
.badge { position: absolute; right: 11px; top: 3px; width: 19px; height: 19px; border-radius: 4px; background: linear-gradient(#fff, #fff) 16px 5px / 1px 9px no-repeat, radial-gradient(circle, #fff 1px, transparent 2px) 1px 7px / 5px 5px no-repeat, radial-gradient(circle, #fff 1px, transparent 2px) 6px 7px / 5px 5px no-repeat, radial-gradient(circle, #fff 1px, transparent 2px) 11px 7px / 5px 5px no-repeat, #d63a34; }
.comma { width: 10px; padding-left: 2px; }
.row input + input { margin-left: 6px; }
.row .second { width: 95px; padding: 0 0 2px 13px; font-size: 15px; font-weight: bold; }
.tick { display: flex; align-items: center; gap: 8px; padding-left: 6px; color: #38424e; font-size: 15px; line-height: 18px; white-space: nowrap; }
.tick span { padding-top: 4px; }
.tick input { appearance: none; width: 14px; height: 14px; border-radius: 2px; background: #d5dae2; border: 1px solid #c3cad3; display: grid; place-items: center; }
.tick input[type=radio] { border-radius: 50%; }
.tick input:checked { background: #b8bcc2; }
.tick input[type=radio]:checked { border: 3px solid #d0d4da; }
.tick input[type=checkbox]:checked::after { content: ""; width: 10px; height: 10px; background: #fff; clip-path: polygon(0 55%, 15% 40%, 38% 65%, 85% 5%, 100% 18%, 40% 95%); }
.tick.red { color: #9b0f12; font-size: 14px; font-weight: bold; }
.tick.tight { gap: 5px; padding-left: 10px; }
.tick.no { padding-left: 14px; }
.tick.end { margin-left: auto; margin-right: 34px; }
.row > .tick.first { width: auto; padding: 0 0 0 4px; font-size: 15px; font-weight: normal; line-height: 18px; }
.ticks { display: grid; grid-template: 22px 22px 26px / 112px 1fr; align-items: center; padding-top: 4px; }
.w72 { width: 72px; } .w100 { width: 100px; } .w102 { width: 102px; } .w104 { width: 104px; } .w113 { width: 113px; } .w124 { width: 124px; } .w148 { width: 148px; } .w151 { width: 151px; } .w170 { width: 170px; } .w174 { width: 174px; } .w210 { width: 210px; } .w241 { width: 241px; } .w271 { width: 271px; }

/* Grid bar */
.gridbar { gap: 3px; padding: 15px 0 9px 6px; }
.gridbar select { margin: 3px 11px 0 0; }
.gridbar .btn { margin-top: 1px; }
.find { display: flex; align-items: center; gap: 4px; padding: 0 5px 0 3px; }
.find svg { width: 16px; height: 16px; }
.hint { display: flex; flex-direction: column; width: 299px; }
.hint small { font-size: 13px; font-style: italic; line-height: 16px; margin-top: -8px; white-space: nowrap; }
.hint input { height: 24px; padding: 0 3px; border: 1px solid #222; background: #fcf7c0; font: 16px/20px var(--arial); }
.hint input::placeholder { color: #b3ae93; opacity: 1; }

/* Right rail */
.rail { display: flex; flex-direction: column; align-items: flex-end; padding-top: 1px; }
.pill { width: 26px; height: 87px; padding: 0; display: grid; place-items: center; border: 1px solid #222; border-radius: 2px 2px 13px 13px; background: #fff; box-shadow: 0 0 30px #555; }
.pill svg { height: 18px; margin-bottom: 12px; }
.card { position: relative; display: flex; flex-direction: column; align-items: center; width: 226px; height: 217px; margin-top: 4px; padding-top: 12px; border: 2px solid #2b313a; border-radius: 12px; background: var(--panel); box-shadow: 0 0 30px #444; color: #fff; font-size: 14px; font-weight: bold; }
.who { display: flex; gap: 4px; line-height: 20px; }
.photo { width: 93px; height: 123px; margin: 11px 0 17px; border: 3px solid; border-color: #000 #777 #777 #000; }
.photo-text { font: italic 18px "Liberation Serif", serif; text-anchor: middle; fill: #3e9bd0; }

/* Tag boxes */
.tag { appearance: none; width: 24px; height: 23px; border: 3px solid; border-color: #b5b5b5 #8a8a8a #8a8a8a #a8a8a8; background: #fff; display: block; }
.tag:checked::after { content: ""; display: block; width: 22px; height: 20px; margin-top: -3px; background: #000; clip-path: polygon(0 58%, 12% 45%, 33% 62%, 84% 0, 100% 0, 97% 16%, 38% 98%, 25% 90%); }

/* Data grid */
.grid { display: flex; flex: 1 0 0; min-height: 0; margin: 0 30px 0 26px; overflow: hidden; border: solid #7e8791; border-width: 1px 1px 0; background: #fff; }
table { flex: 1; align-self: flex-start; width: 100%; table-layout: fixed; border-collapse: collapse; font-size: 12px; line-height: 16px; }
.c-tag { width: 45px; } .c-id { width: 68px; } .c-goes { width: 103px; } .c-last { width: 149px; } .c-mail { width: 184px; } .c-cell { width: 150px; } .c-pos { width: 126px; } .c-bal { width: 97px; }
th { height: 24px; padding: 0 5px; text-align: left; font-weight: normal; background: linear-gradient(#fff 35%, #e9ecef); border-right: 1px solid #dfe4e9; }
td { height: 23px; padding: 0 0 0 5px; white-space: nowrap; border-right: 1px solid #d9dddd; }
th:first-child { text-align: center; padding: 0; }
td:first-child { padding: 0 0 0 11px; }
th:nth-child(8), td:nth-child(8) { text-align: right; padding: 0 3px 0 0; }
th:last-child, td:last-child { border-right: 0; }
tr:nth-child(8n+1) td, tr:nth-child(8n+4) td, tr:nth-child(8n+7) td { height: 24px; }
tbody tr:nth-child(even) { background: #e1e1e1; }
tbody .sel { background: #888; color: #fff; }
.sel td { border-color: #e8e8e8; }

/* Scroll bars */
.scroll { display: flex; flex-direction: column; align-items: center; background: #fcfcfc; }
.up, .down { width: 12px; height: 10px; background: #888; }
.up { clip-path: polygon(40% 0, 60% 0, 100% 85%, 100% 100%, 0 100%, 0 85%); }
.down { clip-path: polygon(0 0, 100% 0, 100% 15%, 60% 100%, 40% 100%, 0 15%); margin-top: auto; }
.thumb { width: 12px; border-radius: 6px; background: #8a8a8a; }
.outer { padding: 6px 0 7px; }
.outer .thumb { height: calc(93vh - 17px); margin-top: 7px; }
.inner { flex: none; width: 21px; padding-top: 8px; }
.inner .thumb { height: 333px; margin-top: 6px; flex: none; }
.inner .down { margin-bottom: -4px; }
```
